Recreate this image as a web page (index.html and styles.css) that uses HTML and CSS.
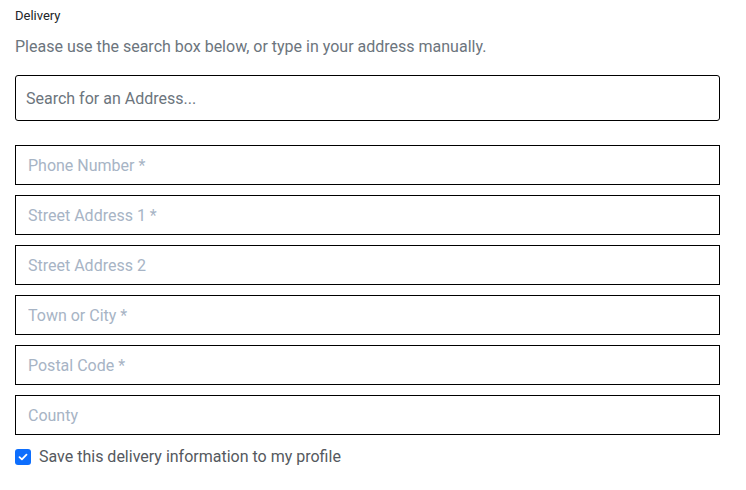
FILE: index.html
```html
<!DOCTYPE html>
<html>
<head>
<meta charset="utf-8">
<link rel="stylesheet" href="styles.css">
</head>
<body>
<form class="form">
  <div class="title">Delivery</div>
  <p class="hint">Please use the search box below, or type in your address manually.</p>
  <input class="search" type="text" placeholder="Search for an Address...">
  <div class="fields">
    <input class="field" type="text" placeholder="Phone Number *">
    <input class="field" type="text" placeholder="Street Address 1 *">
    <input class="field" type="text" placeholder="Street Address 2">
    <input class="field" type="text" placeholder="Town or City *">
    <input class="field" type="text" placeholder="Postal Code *">
    <input class="field" type="text" placeholder="County">
  </div>
  <label class="check">
    <span class="box"><svg width="10" height="8" viewBox="0 0 10 8"><path d="M1.5 4.2 L3.9 6.4 L8.5 1.6" fill="none" stroke="#fff" stroke-width="1.8" stroke-linecap="round" stroke-linejoin="round"/></svg></span>
    <span>Save this delivery information to my profile</span>
  </label>
</form>
</body>
</html>
```
FILE: styles.css
```css
* { box-sizing: border-box; }
html, body { margin: 0; background: #fff; }
body { font-family: Roboto, "Noto Sans", sans-serif; }
.form { padding: 6px 26px 0 15px; display: flex; flex-direction: column; }
.title { font-size: 13px; line-height: 20px; color: #212529; }
.hint { margin: 11px 0 0; font-size: 16px; line-height: 20px; color: #6c757d; }
.search {
  margin-top: 18px; height: 46px; border: 1px solid #000; border-radius: 3px;
  padding: 0 10px; font: 16px Roboto, sans-serif; color: #212529; outline: none;
}
.search::placeholder { color: #6c757d; }
.fields { margin-top: 24px; display: flex; flex-direction: column; gap: 10px; }
.field {
  height: 40px; border: 1px solid #000; border-radius: 0; padding: 0 12px;
  font: 16px Roboto, sans-serif; color: #212529; outline: none;
}
.field::placeholder { color: #a7b4c5; }
.check { margin-top: 14px; display: flex; align-items: center; gap: 8px; font-size: 16px; line-height: 16px; color: #55595e; }
.box { width: 16px; height: 16px; border-radius: 3px; background: #0d6efd; display: flex; align-items: center; justify-content: center; }
```
